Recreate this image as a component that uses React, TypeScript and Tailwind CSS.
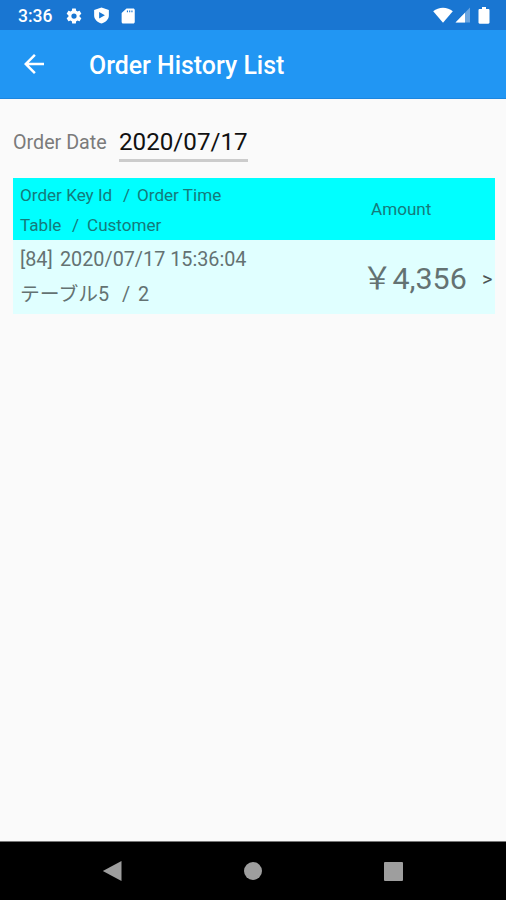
import React from 'react';

const orders = [
  { id: 84, time: '2020/07/17 15:36:04', table: 'テーブル5', customer: 2, amount: '4,356' },
];

const StatusBar = () => (
  <div className="h-[30px] bg-[#1976d2] flex items-center pl-[18px] pr-[16px] text-white">
    <span className="w-[35px] text-[17.5px] leading-[30px] pt-[2px] font-medium whitespace-nowrap">3:36</span>
    <svg viewBox="0 0 24 24" className="ml-[12px] mt-[1px] w-[18px] h-[18px]" fill="currentColor">
      <path fillRule="evenodd" d="M19.43 12.98c.04-.32.07-.64.07-.98s-.03-.66-.07-.98l2.11-1.65c.19-.15.24-.42.12-.64l-2-3.46c-.12-.22-.39-.3-.61-.22l-2.49 1c-.52-.4-1.08-.73-1.69-.98l-.38-2.65A.49.49 0 0 0 14 2h-4c-.25 0-.46.18-.49.42l-.38 2.65c-.61.25-1.17.59-1.69.98l-2.49-1c-.23-.09-.49 0-.61.22l-2 3.46c-.13.22-.07.49.12.64l2.11 1.65c-.04.32-.07.65-.07.98s.03.66.07.98l-2.11 1.65c-.19.15-.24.42-.12.64l2 3.46c.12.22.39.3.61.22l2.49-1c.52.4 1.08.73 1.69.98l.38 2.65c.03.24.24.42.49.42h4c.25 0 .46-.18.49-.42l.38-2.65c.61-.25 1.17-.59 1.69-.98l2.49 1c.23.09.49 0 .61-.22l2-3.46c.12-.22.07-.49-.12-.64l-2.11-1.65zM12 15.5a3.5 3.5 0 1 1 0-7 3.5 3.5 0 0 1 0 7z" />
    </svg>
    <svg viewBox="0 0 24 24" className="ml-[9px] mt-[1px] w-[19px] h-[19px]" fill="currentColor">
      <path fillRule="evenodd" d="M12 2 2.700 5.200V12c0 4.800 3.900 8.500 9.300 10 5.400-1.500 9.300-5.200 9.300-10V5.200L12 2zM9 7.700v8.200l7.300-4.100L9 7.700z" />
    </svg>
    <svg viewBox="0 0 24 24" className="ml-[8px] mt-[1px] w-[18px] h-[18px]" fill="currentColor">
      <path fillRule="evenodd" d="M19 2h-9L3.500 8v12c0 1.100.9 2 2 2H19c1.100 0 2-.9 2-2V4c0-1.100-.9-2-2-2zM10.500 4.500H12V7h-1.500V4.500zm3 0H15V7h-1.500V4.500zm3 0H18V7h-1.500V4.500z" />
    </svg>
    <div className="ml-auto flex items-center">
      <svg viewBox="0 0 20 16" className="w-[20px] h-[16px]" fill="currentColor">
        <path d="M.2 4.200C3 1.900 6.300.7 10 .7s7 1.200 9.800 3.500L10 15.700z" />
      </svg>
      <svg viewBox="0 0 15 16" className="ml-[2px] w-[15px] h-[16px]" fill="currentColor">
        <path d="M15 .5v15H.5z" opacity=".35" />
        <path d="M10 5.700v9.800H.5z" />
      </svg>
      <svg viewBox="0 0 12 17" className="ml-[8px] w-[12px] h-[17px]" fill="currentColor">
        <path d="M4 0h4v2h2.300c.7 0 1.200.5 1.200 1.200v12.300c0 .7-.5 1.200-1.200 1.200H1.700c-.7 0-1.200-.5-1.200-1.200V3.200C.5 2.500 1 2 1.700 2H4z" />
      </svg>
    </div>
  </div>
);

const AppBar = () => (
  <header className="h-[69px] bg-[#2196f3] border-b border-[#1c86df] flex items-center text-white">
    <button type="button" aria-label="Back" className="ml-[19px] w-[30px] h-[30px]">
      <svg viewBox="0 0 24 24" className="w-[30px] h-[30px]" fill="currentColor">
        <path d="M20 11H7.830l5.590-5.590L12 4l-8 8 8 8 1.410-1.410L7.830 13H20v-2z" />
      </svg>
    </button>
    <h1 className="ml-[40px] pt-[4px] text-[24.9px] font-medium whitespace-nowrap">Order History List</h1>
  </header>
);

const NavBar = () => (
  <nav className="h-[59px] bg-black border-t border-[#777777] flex items-center text-[#9e9e9e]">
    <svg viewBox="0 0 20 22" className="ml-[102px] w-[20px] h-[22px]" fill="currentColor">
      <path d="M19.500 1v20L.8 11z" />
    </svg>
    <div className="ml-[122px] w-[18px] h-[18px] rounded-full bg-[#9e9e9e]" />
    <div className="ml-[122px] w-[19px] h-[19px] rounded-[1px] bg-[#9e9e9e]" />
  </nav>
);

function App() {
  return (
    <div className="w-[506px] h-[900px] flex flex-col bg-[#fafafa] font-[Roboto,'Noto_Sans_CJK_JP',sans-serif] overflow-hidden">
      <StatusBar />
      <AppBar />

      <main className="flex-1 px-[13px] pt-[25px]">
        <div className="flex items-start whitespace-nowrap">
          <label className="w-[106px] pt-[4px] text-[19.7px] leading-[30px] text-[#7b7b7b]">Order Date</label>
          <div className="w-[129px] h-[38px] border-b-[3px] border-[#cccccc] text-[24.2px] leading-[37px] text-[#111111]">
            2020/07/17
          </div>
        </div>

        <section className="mt-[16px] w-[482px] whitespace-pre">
          <div className="h-[62px] bg-[#00ffff] flex items-center pt-[1px] pl-[7px] text-[17.1px] text-[#157b7b]">
            <div className="w-[351px] leading-[30px]">
              <div className="flex">
                <span className="w-[103px]">Order Key Id</span>
                <span className="w-[14px]">/</span>
                <span>Order Time</span>
              </div>
              <div className="flex">
                <span className="w-[52px]">Table</span>
                <span className="w-[15px]">/</span>
                <span>Customer</span>
              </div>
            </div>
            <span>Amount</span>
          </div>

          {orders.map((order) => (
            <div key={order.id} className="h-[74px] bg-[#e0ffff] flex items-center pl-[7px] text-[19.8px] text-[#647272]">
              <div className="w-[342px] leading-[35px]">
                <div className="flex">
                  <span className="w-[40px]">[{order.id}]</span>
                  <span>{order.time}</span>
                </div>
                <div className="flex">
                  <span className="w-[102px]">{order.table}</span>
                  <span className="w-[16px]">/</span>
                  <span>{order.customer}</span>
                </div>
              </div>
              {/* fullwidth yen sign */}
              <div className="w-[120px] pt-[4px] text-[30.4px] leading-[44px]">{'\uFFE5'}{order.amount}</div>
              <span className="pt-[3px] text-[20px] text-[#4c5555]">&gt;</span>
            </div>
          ))}
        </section>
      </main>

      <NavBar />
    </div>
  );
}

export default App;
